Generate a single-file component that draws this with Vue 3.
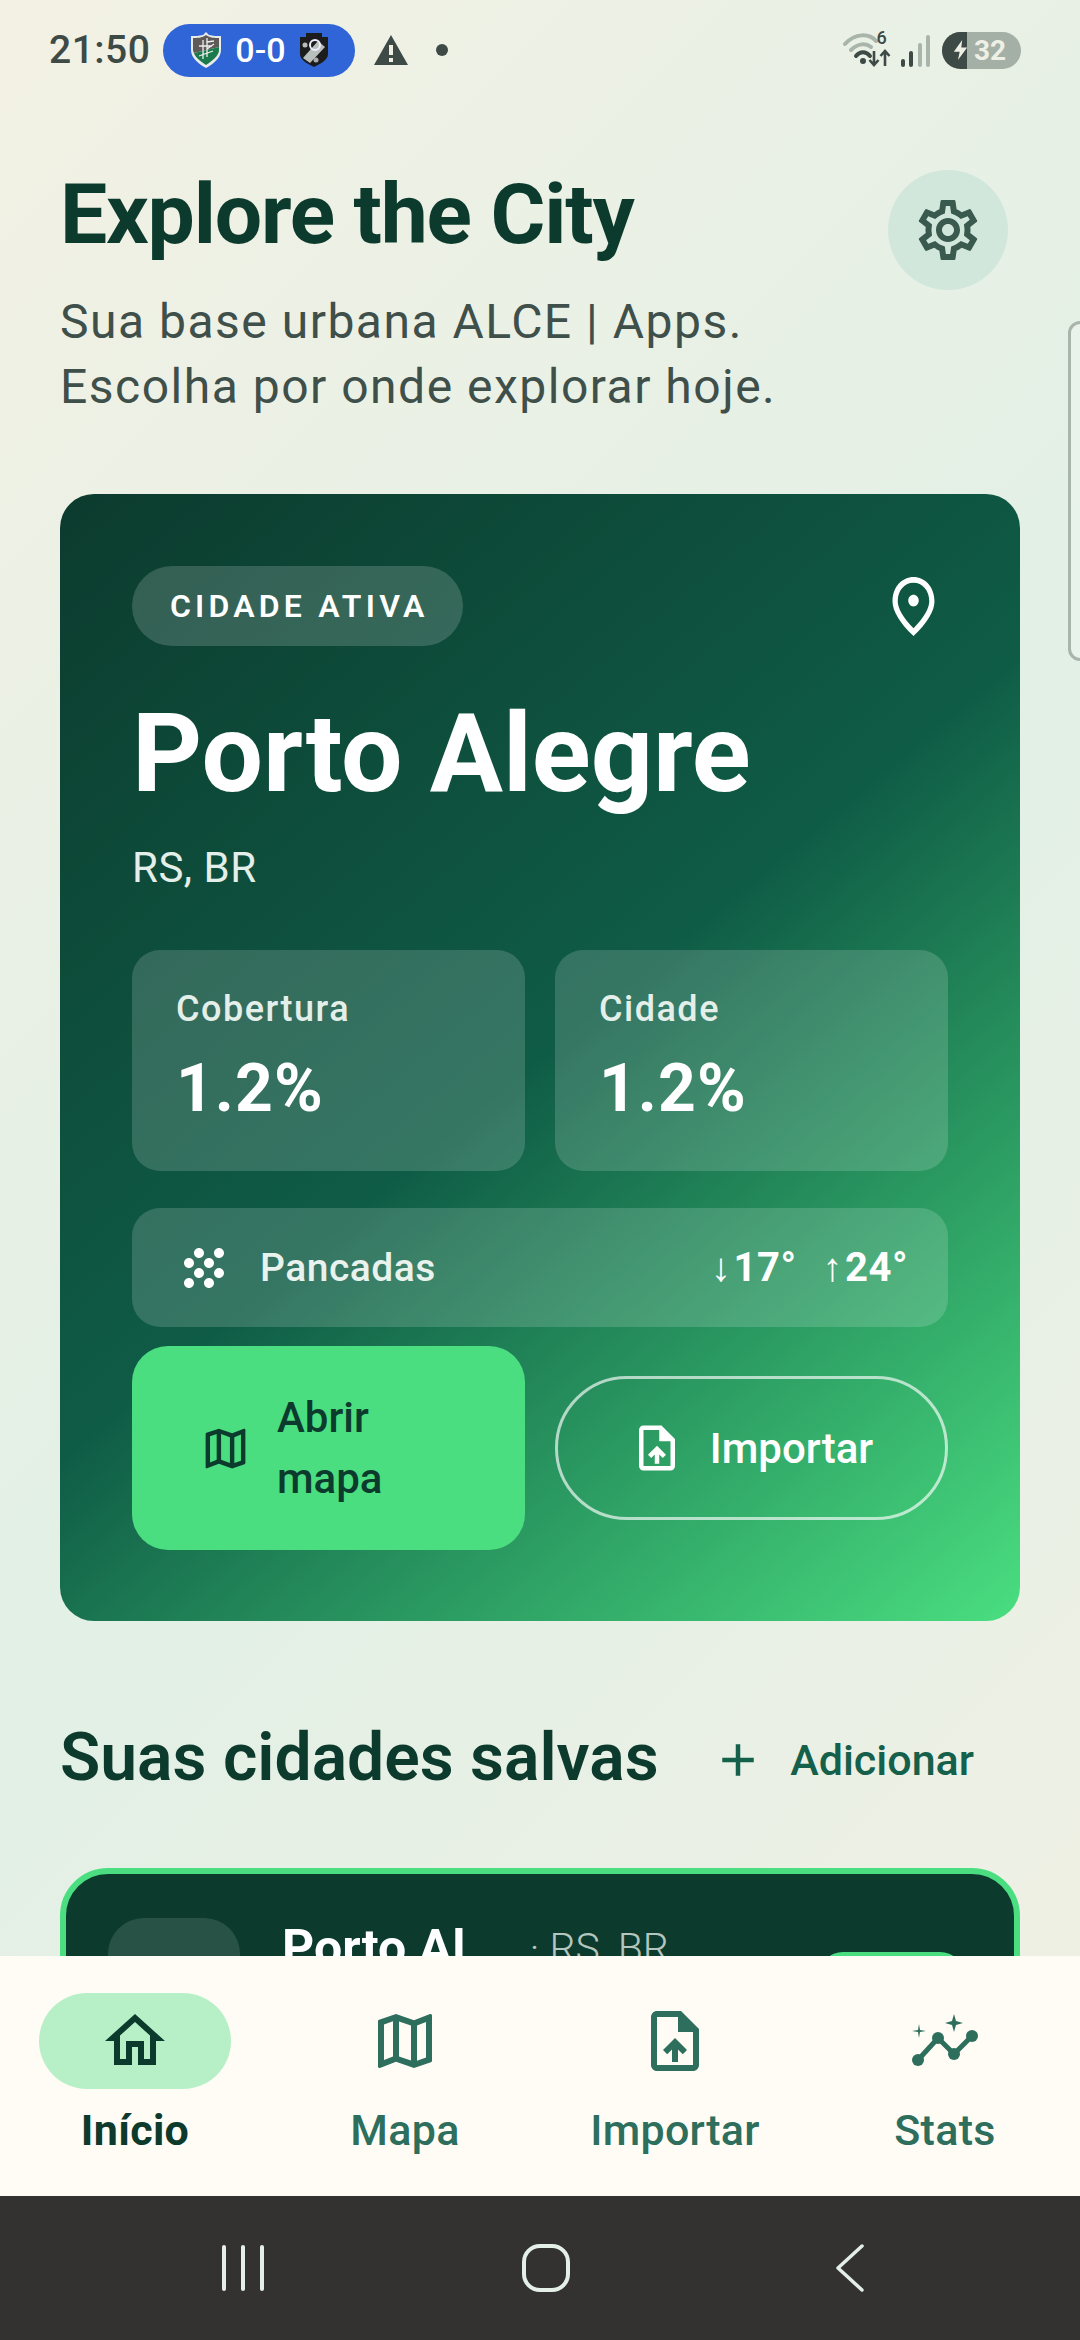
<script setup>
const tabs = [
  { label: "Início", icon: "home", active: true },
  { label: "Mapa", icon: "map" },
  { label: "Importar", icon: "upload" },
  { label: "Stats", icon: "graph" },
];

const icons = {
  gear: "M19.43 12.98c.04-.32.07-.64.07-.98 0-.34-.03-.66-.07-.98l2.11-1.65c.19-.15.24-.42.12-.64l-2-3.46c-.09-.16-.26-.25-.44-.25-.06 0-.12.01-.17.03l-2.49 1c-.52-.4-1.08-.73-1.69-.98l-.38-2.65C14.46 2.18 14.25 2 14 2h-4c-.25 0-.46.18-.49.42l-.38 2.65c-.61.25-1.17.59-1.69.98l-2.49-1c-.06-.02-.12-.03-.18-.03-.17 0-.34.09-.43.25l-2 3.46c-.13.22-.07.49.12.64l2.11 1.65c-.04.32-.07.65-.07.98 0 .33.03.66.07.98l-2.11 1.65c-.19.15-.24.42-.12.64l2 3.46c.09.16.26.25.44.25.06 0 .12-.01.17-.03l2.49-1c.52.4 1.08.73 1.69.98l.38 2.65c.03.24.24.42.49.42h4c.25 0 .46-.18.49-.42l.38-2.65c.61-.25 1.17-.59 1.69-.98l2.49 1c.06.02.12.03.18.03.17 0 .34-.09.43-.25l2-3.46c.12-.22.07-.49-.12-.64l-2.11-1.65zm-1.98-1.71c.04.31.05.52.05.73 0 .21-.02.43-.05.73l-.14 1.13.89.7 1.08.84-.7 1.21-1.27-.51-1.04-.42-.9.68c-.43.32-.84.56-1.25.73l-1.06.43-.16 1.13-.2 1.35h-1.4l-.19-1.35-.16-1.13-1.06-.43c-.43-.18-.83-.41-1.23-.71l-.91-.7-1.06.43-1.27.51-.7-1.21 1.08-.84.89-.7-.14-1.13c-.03-.31-.05-.54-.05-.74s.02-.43.05-.73l.14-1.13-.89-.7-1.08-.84.7-1.21 1.27.51 1.04.42.9-.68c.43-.32.84-.56 1.25-.73l1.06-.43.16-1.13.2-1.35h1.39l.19 1.35.16 1.13 1.06.43c.43.18.83.41 1.23.71l.91.7 1.06-.43 1.27-.51.7 1.21-1.07.85-.89.7.14 1.13zM12 8c-2.21 0-4 1.79-4 4s1.79 4 4 4 4-1.79 4-4-1.79-4-4-4zm0 6c-1.1 0-2-.9-2-2s.9-2 2-2 2 .9 2 2-.9 2-2 2z",
  pin: "M12 12c-1.1 0-2-.9-2-2s.9-2 2-2 2 .9 2 2-.9 2-2 2zm6-1.8C18 6.57 15.35 4 12 4s-6 2.57-6 6.2c0 2.34 1.95 5.44 6 9.14 4.05-3.7 6-6.8 6-9.14zM12 2c4.2 0 8 3.22 8 8.2 0 3.32-2.67 7.25-8 11.8-5.33-4.55-8-8.48-8-11.8C4 5.22 7.8 2 12 2z",
  map: "M20.5 3l-.16.03L15 5.1 9 3 3.36 4.9c-.21.07-.36.25-.36.48V20.5c0 .28.22.5.5.5l.16-.03L9 18.9l6 2.1 5.64-1.9c.21-.07.36-.25.36-.48V3.5c0-.28-.22-.5-.5-.5zM10 5.47l4 1.4v11.66l-4-1.4V5.47zm-5 .99l3-1.01v11.7l-3 1.16V6.46zm14 11.08l-3 1.01V6.86l3-1.16v11.84z",
  upload: "M14 2H6c-1.1 0-1.99.9-1.99 2L4 20c0 1.1.89 2 1.99 2H18c1.1 0 2-.9 2-2V8l-6-6zm4 18H6V4h7v5h5v11zM8 15.01l1.41 1.41L11 14.84V19h2v-4.16l1.59 1.59L16 15.01 12.01 11 8 15.01z",
  home: "M12 5.69l5 4.5V18h-2v-6H9v6H7v-7.81l5-4.5M12 3L2 12h3v8h6v-6h2v6h6v-8h3L12 3z",
  grain: "M10 12c-1.1 0-2 .9-2 2s.9 2 2 2 2-.9 2-2-.9-2-2-2zM6 8c-1.1 0-2 .9-2 2s.9 2 2 2 2-.9 2-2-.9-2-2-2zm0 8c-1.1 0-2 .9-2 2s.9 2 2 2 2-.9 2-2-.9-2-2-2zm12-8c1.1 0 2-.9 2-2s-.9-2-2-2-2 .9-2 2 .9 2 2 2zm-4 8c-1.1 0-2 .9-2 2s.9 2 2 2 2-.9 2-2-.9-2-2-2zm4-4c-1.1 0-2 .9-2 2s.9 2 2 2 2-.9 2-2-.9-2-2-2zm-4-4c-1.1 0-2 .9-2 2s.9 2 2 2 2-.9 2-2-.9-2-2-2zm-4-4c-1.1 0-2 .9-2 2s.9 2 2 2 2-.9 2-2-.9-2-2-2z",
  plus: "M19 13h-6v6h-2v-6H5v-2h6V5h2v6h6v2z",
};
</script>

<template>
  <div class="screen">
    <div class="content">
      <div class="statusbar">
        <div class="status-left">
          <span class="clock">21:50</span>
          <div class="score">
            <svg width="30" height="36" viewBox="0 0 30 36">
              <path d="M15 0 L18 3 C22 4 26 4 30 4 V18 C30 26 22 32 15 36 C8 32 0 26 0 18 V4 C4 4 8 4 12 3 Z" fill="#e9ecea" />
              <path d="M15 3 C19 6 24 6 28 6 V15 L3 21 C2.4 20 2 19 2 18 V6 C6 6 11 6 15 3 Z" fill="#5d5a58" />
              <path d="M28 15 V18 C28 24 21 29 15 33 C9 29 4 25 3 21 Z" fill="#1b7a4c" />
              <path d="M12 8 V27 M16 6 V25 M8 14 H21 M8 24 L22 19 M16 10 L23 9 M16 17 L23 12" stroke="#eee" stroke-width="1.3" fill="none" />
            </svg>
            <span>0-0</span>
            <svg width="28" height="34" viewBox="0 0 28 34">
              <path d="M6 0 H22 V4 H28 V21 C28 27 20 31 14 34 C8 31 0 27 0 21 V4 H6 Z" fill="#1c1c1c" />
              <path d="M3 25 L18 8 L25 14 L10 30 Z" fill="#b9bfbc" />
              <circle cx="15" cy="12" r="5" fill="none" stroke="#eef" stroke-width="2" />
              <circle cx="5" cy="12" r="2.5" fill="#bbb" />
              <circle cx="16" cy="27" r="2.5" fill="#aaa" />
            </svg>
          </div>
          <svg class="warn" width="36" height="32" viewBox="0 0 36 32">
            <path d="M18 1 L35 31 H1 Z" fill="#3d4a46" />
            <rect x="16" y="11" width="4" height="10" fill="#f0efe2" />
            <rect x="16" y="24" width="4" height="4" fill="#f0efe2" />
          </svg>
          <span class="dot"></span>
        </div>
        <div class="status-right">
          <svg width="48" height="36" viewBox="0 0 48 36">
            <path d="M2 12 C12 1 26 1 33 9" fill="none" stroke="#a9b4ab" stroke-width="4" stroke-linecap="round" />
            <path d="M8 18 C15 11 23 11 28 15" fill="none" stroke="#a9b4ab" stroke-width="4" stroke-linecap="round" />
            <path d="M13 24 C17 19 23 19 27 24" fill="none" stroke="#3d4a46" stroke-width="4" stroke-linecap="round" />
            <circle cx="20" cy="29" r="3" fill="#3d4a46" />
            <path d="M31 19 V33 M26.5 28 L31 33 L35.5 28 M42 34 V19 M37.5 24 L42 19 L46.5 24" fill="none" stroke="#3d4a46" stroke-width="2.6" />
          </svg>
          <span class="net">6</span>
          <div class="signal">
            <i class="on" style="height: 8px"></i>
            <i class="on" style="height: 16px"></i>
            <i style="height: 24px"></i>
            <i style="height: 32px"></i>
          </div>
          <div class="battery">
            <div class="battery-fill">
              <svg width="17" height="20" viewBox="0 0 18 24">
                <path d="M11 0 L1 14 H8 L6 24 L17 9 H10 Z" fill="#eef0e6" />
              </svg>
            </div>
            <span>32</span>
          </div>
        </div>
      </div>

      <header class="head">
        <div>
          <h1>Explore the City</h1>
          <p>Sua base urbana ALCE | Apps.<br />Escolha por onde explorar hoje.</p>
        </div>
        <button class="gear">
          <svg width="72" height="72" viewBox="0 0 24 24"><path :d="icons.gear" /></svg>
        </button>
      </header>

      <section class="hero">
        <div class="hero-top">
          <span class="chip">CIDADE ATIVA</span>
          <svg width="63" height="71" viewBox="0 0 24 24" preserveAspectRatio="none"><path :d="icons.pin" fill="#fff" /></svg>
        </div>
        <h2>Porto Alegre</h2>
        <div class="region">RS, BR</div>
        <div class="stats">
          <div class="stat">
            <span>Cobertura</span>
            <strong>1.2%</strong>
          </div>
          <div class="stat">
            <span>Cidade</span>
            <strong>1.2%</strong>
          </div>
        </div>
        <div class="weather">
          <svg width="60" height="60" viewBox="0 0 24 24"><path :d="icons.grain" fill="#fff" /></svg>
          <span class="weather-name">Pancadas</span>
          <span class="temps"><small>↓</small>17°<small class="up">↑</small>24°</span>
        </div>
        <div class="actions">
          <button class="primary">
            <svg width="53" height="53" viewBox="0 0 24 24"><path :d="icons.map" /></svg>
            <span>Abrir<br />mapa</span>
          </button>
          <button class="outline">
            <svg width="54" height="54" viewBox="0 0 24 24"><path :d="icons.upload" /></svg>
            <span>Importar</span>
          </button>
        </div>
      </section>

      <div class="section-head">
        <h3>Suas cidades salvas</h3>
        <div class="add">
          <svg width="54" height="54" viewBox="0 0 24 24"><path :d="icons.plus" /></svg>
          <span>Adicionar</span>
        </div>
      </div>

      <div class="saved">
        <div class="thumb"></div>
        <div class="saved-name">
          <strong>Porto Al</strong>
          <span>· RS, BR</span>
        </div>
        <div class="saved-btn"></div>
      </div>
    </div>

    <div class="handle"></div>

    <nav class="tabs">
      <div v-for="tab in tabs" :key="tab.label" class="tab" :class="{ active: tab.active }">
        <div class="tab-icon">
          <svg v-if="tab.icon === 'graph'" width="72" height="72" viewBox="0 0 72 72">
            <path d="M9 55 L29 33 L45 49 L63 31" fill="none" stroke="#2d6e5c" stroke-width="5" />
            <circle cx="9" cy="55" r="6" />
            <circle cx="29" cy="33" r="6" />
            <circle cx="45" cy="49" r="6" />
            <circle cx="63" cy="31" r="6" />
            <path d="M45 9 L47 16 L54 18 L47 20 L45 27 L43 20 L36 18 L43 16 Z" />
            <path d="M10 19 L11 25 L17 26 L11 27 L10 33 L9 27 L3 26 L9 25 Z" />
          </svg>
          <svg v-else width="72" height="72" viewBox="0 0 24 24"><path :d="icons[tab.icon]" /></svg>
        </div>
        <span>{{ tab.label }}</span>
      </div>
    </nav>

    <div class="sysnav">
      <div class="recents"><i></i><i></i><i></i></div>
      <div class="homebtn"></div>
      <svg width="29" height="48" viewBox="0 0 29 48">
        <path d="M27 2 L3 24 L27 46" fill="none" stroke="#e3efe7" stroke-width="3.5" stroke-linecap="round" stroke-linejoin="round" />
      </svg>
    </div>
  </div>
</template>

<style>
html,
body {
  margin: 0;
  background: #efefe3;
}
</style>

<style scoped>
* {
  box-sizing: border-box;
}

.screen {
  position: relative;
  width: 1080px;
  height: 2340px;
  display: flex;
  flex-direction: column;
  overflow: hidden;
  font-family: Roboto, "Noto Sans", sans-serif;
  background: linear-gradient(135deg, #f3f1e4 0%, #e2f0e6 50%, #f3f0e4 100%);
}

.content {
  flex: 1;
  min-height: 0;
  overflow: hidden;
}

.statusbar {
  height: 100px;
  padding: 0 59px 0 49px;
  display: flex;
  align-items: center;
  justify-content: space-between;
}

.status-left,
.status-right {
  display: flex;
  align-items: center;
}

.clock {
  font-size: 39px;
  font-weight: 500;
  color: #3d4a46;
  letter-spacing: 0.5px;
}

.score {
  margin-left: 13px;
  width: 192px;
  height: 53px;
  border-radius: 27px;
  background: #2f65d6;
  color: #fff;
  font-size: 34px;
  font-weight: 500;
  display: flex;
  align-items: center;
  justify-content: center;
  gap: 14px;
}

.warn {
  margin-left: 18px;
}

.dot {
  width: 12px;
  height: 12px;
  margin-left: 27px;
  border-radius: 50%;
  background: #3d4a46;
}

.net {
  font-size: 18px;
  font-weight: 500;
  color: #3d4a46;
  margin: -26px 0 0 -14px;
  width: 12px;
}

.signal {
  display: flex;
  align-items: flex-end;
  gap: 4.5px;
  margin-left: 12px;
  height: 33px;
}

.signal i {
  width: 4px;
  background: #a9b4ab;
  border-radius: 2px;
}

.signal i.on {
  background: #3d4a46;
}

.battery {
  margin-left: 12px;
  width: 79px;
  height: 37px;
  border-radius: 19px;
  overflow: hidden;
  background: #a4afa6;
  display: flex;
  align-items: center;
  color: #eef0e6;
  font-size: 28px;
  font-weight: 700;
}

.battery-fill {
  width: 25px;
  height: 37px;
  background: #3d4a46;
  display: flex;
  align-items: center;
  justify-content: flex-end;
  flex-shrink: 0;
  margin-right: 7px;
}

.battery-fill svg {
  margin-right: -2px;
}

.head {
  padding: 69px 72px 0 60px;
  display: flex;
  justify-content: space-between;
  align-items: flex-start;
}

h1 {
  margin: 0;
  font-size: 84px;
  line-height: 92px;
  font-weight: 700;
  color: #0c3b2e;
  letter-spacing: -1.2px;
}

.head p {
  margin: 28px 0 0;
  font-size: 48px;
  line-height: 65px;
  color: #3f4f4a;
  letter-spacing: 1.5px;
}

.gear {
  width: 120px;
  height: 120px;
  margin-top: 1px;
  border: none;
  border-radius: 50%;
  background: #d2e7dc;
  display: flex;
  align-items: center;
  justify-content: center;
  padding: 0;
}

.gear svg {
  fill: #3a5a4f;
}

.hero {
  margin: 75px 60px 0;
  height: 1127px;
  padding: 72px;
  border-radius: 34px;
  color: #fff;
  background: linear-gradient(140deg, #0c3b2e 0%, #0f5c46 50%, #4ade80 100%);
}

.hero-top {
  display: flex;
  justify-content: space-between;
  align-items: center;
  height: 80px;
}

.hero-top svg {
  margin-right: 3.5px;
}

.chip {
  height: 80px;
  padding: 0 34px 0 38px;
  display: flex;
  align-items: center;
  border-radius: 40px;
  background: rgba(255, 255, 255, 0.17);
  font-size: 32px;
  font-weight: 600;
  letter-spacing: 4.2px;
}

.hero h2 {
  margin: 43px 0 0;
  font-size: 109px;
  line-height: 130px;
  font-weight: 700;
}

.region {
  margin-top: 24px;
  font-size: 42px;
  line-height: 50px;
  color: #e4efe9;
  letter-spacing: 0.5px;
}

.stats {
  margin-top: 57px;
  display: grid;
  grid-template-columns: 1fr 1fr;
  gap: 30px;
}

.stat {
  height: 221px;
  padding: 36px 44px;
  border-radius: 28px;
  background: rgba(255, 255, 255, 0.16);
  display: flex;
  flex-direction: column;
}

.stat span {
  font-size: 36px;
  line-height: 46px;
  font-weight: 500;
  color: #e4efe9;
  letter-spacing: 1.5px;
}

.stat strong {
  margin-top: 17px;
  font-size: 66px;
  line-height: 80px;
  font-weight: 700;
  letter-spacing: 1px;
}

.weather {
  margin-top: 37px;
  height: 119px;
  padding: 0 40px 0 42px;
  border-radius: 28px;
  background: rgba(255, 255, 255, 0.16);
  display: flex;
  align-items: center;
}

.weather-name {
  margin-left: 26px;
  font-size: 39px;
  font-weight: 500;
  color: #e9f2ec;
  letter-spacing: 0.5px;
}

.temps {
  margin-left: auto;
  font-size: 40px;
  font-weight: 700;
  letter-spacing: 0.5px;
  display: flex;
  align-items: center;
}

.temps small {
  font-size: 40px;
  font-weight: 300;
  margin-right: 2px;
}

.temps .up {
  margin-left: 26px;
}

.actions {
  margin-top: 19px;
  display: grid;
  grid-template-columns: 1fr 1fr;
  gap: 30px;
  align-items: center;
}

.actions button {
  display: flex;
  align-items: center;
  font-family: inherit;
  font-size: 42px;
  font-weight: 500;
  text-align: left;
  padding: 0;
}

.primary {
  height: 204px;
  padding-left: 67px !important;
  gap: 25px;
  border: none;
  border-radius: 36px;
  background: #4ade80;
  color: #0c3b2e;
  line-height: 61px;
}

.primary svg {
  fill: #0c3b2e;
}

.outline {
  height: 144px;
  justify-content: center;
  gap: 26px;
  border: 3px solid rgba(255, 255, 255, 0.65);
  border-radius: 72px;
  background: none;
  color: #fff;
}

.outline svg {
  fill: #fff;
}

.section-head {
  margin: 97px 106px 0 60px;
  display: flex;
  align-items: center;
  justify-content: space-between;
}

h3 {
  margin: 0;
  font-size: 66px;
  line-height: 80px;
  font-weight: 600;
  color: #0c3b2e;
}

.add {
  margin-top: 3px;
  display: flex;
  align-items: center;
  gap: 25px;
  font-size: 43px;
  font-weight: 500;
  color: #15604a;
}

.add svg {
  fill: #15604a;
}

.saved {
  position: relative;
  margin: 70px 60px 0;
  height: 300px;
  padding: 44px 42px;
  border: 6px solid #4ade80;
  border-radius: 48px;
  background: #0c3b2e;
  display: flex;
  align-items: flex-start;
}

.thumb {
  width: 132px;
  height: 132px;
  border-radius: 36px;
  background: rgba(255, 255, 255, 0.12);
}

.saved-name {
  margin-left: 42px;
  margin-top: 1px;
  display: flex;
  align-items: flex-start;
  gap: 64px;
  color: #fff;
}

.saved-name strong {
  font-size: 50px;
  font-weight: 700;
}

.saved-name span {
  margin-top: 5px;
  font-size: 41px;
  font-weight: 300;
  color: #b5c6bf;
}

.saved-btn {
  position: absolute;
  left: 753px;
  top: 78px;
  width: 145px;
  height: 90px;
  border-radius: 24px;
  background: #4ade80;
}

.handle {
  position: absolute;
  top: 321px;
  right: -12px;
  width: 24px;
  height: 340px;
  border: 3px solid #a9b4ab;
  border-radius: 12px;
  background: rgba(255, 255, 255, 0.2);
}

.tabs {
  height: 240px;
  flex-shrink: 0;
  background: #fffcf5;
  display: grid;
  grid-template-columns: repeat(4, 270px);
}

.tab {
  padding-top: 37px;
  display: flex;
  flex-direction: column;
  align-items: center;
  color: #2d6e5c;
  font-size: 43px;
  font-weight: 500;
  letter-spacing: 0.3px;
}

.tab-icon {
  width: 192px;
  height: 96px;
  border-radius: 48px;
  display: flex;
  align-items: center;
  justify-content: center;
  margin-bottom: 16px;
}

.tab svg {
  fill: #2d6e5c;
}

.tab.active {
  color: #0c3b2e;
  font-weight: 700;
}

.tab.active .tab-icon {
  background: #b7f0c6;
}

.tab.active svg {
  fill: #0c3b2e;
}

.sysnav {
  height: 144px;
  flex-shrink: 0;
  background: #333230;
  display: grid;
  grid-template-columns: repeat(3, 303px);
  justify-content: center;
  justify-items: center;
  align-items: center;
  padding-left: 12px;
}

.recents {
  display: flex;
  gap: 15px;
}

.recents i {
  width: 4px;
  height: 46px;
  border-radius: 2px;
  background: #e3efe7;
}

.homebtn {
  width: 48px;
  height: 48px;
  border: 4.5px solid #e3efe7;
  border-radius: 18px;
}
</style>
